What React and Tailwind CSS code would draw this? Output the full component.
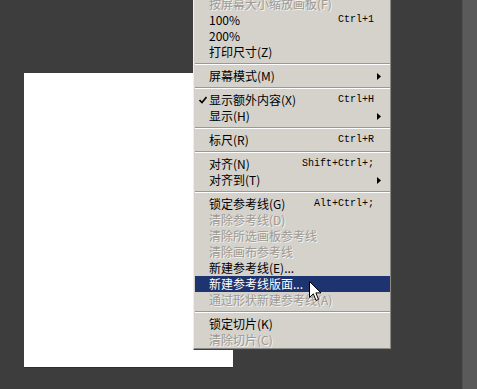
import React from "react";

const items = [
  { label: "按屏幕大小缩放画板(F)", disabled: true },
  { label: "100%", shortcut: "Ctrl+1" },
  { label: "200%" },
  { label: "打印尺寸(Z)" },
  { sep: true },
  { label: "屏幕模式(M)", submenu: true },
  { sep: true },
  { label: "显示额外内容(X)", shortcut: "Ctrl+H", checked: true },
  { label: "显示(H)", submenu: true },
  { sep: true },
  { label: "标尺(R)", shortcut: "Ctrl+R" },
  { sep: true },
  { label: "对齐(N)", shortcut: "Shift+Ctrl+;" },
  { label: "对齐到(T)", submenu: true },
  { sep: true },
  { label: "锁定参考线(G)", shortcut: "Alt+Ctrl+;" },
  { label: "清除参考线(D)", disabled: true },
  { label: "清除所选画板参考线", disabled: true },
  { label: "清除画布参考线", disabled: true },
  { label: "新建参考线(E)..." },
  { label: "新建参考线版面...", active: true },
  { label: "通过形状新建参考线(A)", disabled: true },
  { sep: true },
  { label: "锁定切片(K)" },
  { label: "清除切片(C)", disabled: true },
];

const Check = () => (
  <svg width="8" height="8" viewBox="0 0 8 8" className="absolute left-[4px] top-[4px]">
    <path d="M0.5 4 L3 6.5 L7.5 1" stroke="#000" strokeWidth="1.6" fill="none" />
  </svg>
);

const Arrow = ({ color }) => (
  <svg width="4" height="7" viewBox="0 0 4 7" className="absolute right-[9px] top-[5px]">
    <path d="M0 0 L4 3.5 L0 7 Z" fill={color} />
  </svg>
);

const Cursor = () => (
  <svg width="13" height="21" viewBox="0 0 13 21" className="absolute left-[309px] top-[281px]">
    <path
      d="M0.5 0.5 L0.5 16.5 L4.3 12.8 L7 19.5 L9.5 18.4 L6.9 11.9 L12 11.9 Z"
      fill="#fff"
      stroke="#000"
      strokeWidth="1"
      strokeLinejoin="miter"
    />
  </svg>
);

const MenuRow = ({ item }) => {
  if (item.sep) {
    return (
      <div className="h-[8px] flex flex-col justify-center px-[1px]">
        <div className="h-[1px] bg-[#9a9893]" />
        <div className="h-[1px] bg-white" />
      </div>
    );
  }
  const textColor = item.active ? "text-white" : item.disabled ? "text-[#9d9a94]" : "text-black";
  return (
    <div
      className={`relative h-[16px] mx-[1px] flex items-center pl-[14px] pr-[16px] ${
        item.active ? "bg-[#1d3470]" : ""
      } ${textColor}`}
    >
      {item.checked && <Check />}
      <span
        className={`flex-1 text-[12px] leading-[16px] whitespace-nowrap ${
          item.disabled ? "[text-shadow:1px_1px_0_#f4f3f0]" : ""
        }`}
        style={{ fontFamily: '"Noto Sans CJK SC", "Liberation Sans", sans-serif' }}
      >
        {item.label}
      </span>
      {item.shortcut && (
        <span className="text-[10px] leading-[16px] whitespace-nowrap font-['Liberation_Mono',monospace]">
          {item.shortcut}
        </span>
      )}
      {item.submenu && <Arrow color={item.active ? "#fff" : "#000"} />}
    </div>
  );
};

export default function App() {
  return (
    <div className="relative w-[477px] h-[389px] overflow-hidden bg-[#3d3d3d] flex">
      <div className="flex-1">
        <div className="ml-[24px] mt-[73px] w-[209px] h-[295px] bg-white border-b border-[#2e2e2e]" />
      </div>
      <div className="w-[15px] bg-[#5a5a5a] border-l border-[#505050]" />

      <div className="absolute left-[193px] top-[-5px] w-[199px] bg-[#d5d2cc] border border-t-[#f0eee9] border-l-[#f0eee9] border-r-[#404040] border-b-[#404040] shadow-[inset_-1px_-1px_0_#8c8a86] pb-[1px]">
        {items.map((item, i) => (
          <MenuRow key={i} item={item} />
        ))}
      </div>

      <Cursor />
    </div>
  );
}
